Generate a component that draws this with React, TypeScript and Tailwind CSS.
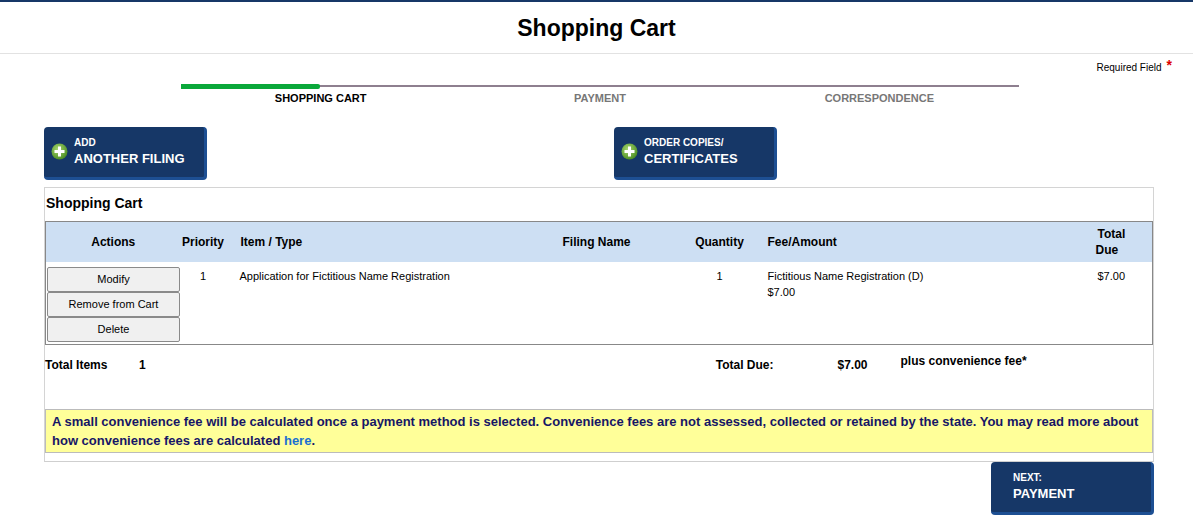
import React from "react";

const Plus = () => (
  <svg width="17" height="17" viewBox="0 0 17 17" className="shrink-0">
    <defs>
      <radialGradient id="g" cx="40%" cy="35%" r="65%">
        <stop offset="0%" stopColor="#a8d870" />
        <stop offset="100%" stopColor="#4e8f25" />
      </radialGradient>
    </defs>
    <circle cx="8.5" cy="8.5" r="8" fill="url(#g)" />
    <rect x="7" y="3.5" width="3" height="10" fill="#fff" />
    <rect x="3.5" y="7" width="10" height="3" fill="#fff" />
  </svg>
);

const NavBtn = ({ top, bottom, icon = true }: { top: string; bottom: string; icon?: boolean }) => (
  <div className="w-[163px] h-[53px] bg-[#163767] rounded-[4px] border-r-[3px] border-b-[3px] border-[#1d4f93] flex items-center text-white font-bold">
    {icon ? <div className="ml-[7px] mr-[6px]"><Plus /></div> : <div className="w-[22px]" />}
    <div className="flex flex-col leading-none">
      <span className="text-[10px] mb-[4px]">{top}</span>
      <span className="text-[13px]">{bottom}</span>
    </div>
  </div>
);

const GrayBtn = ({ label }: { label: string }) => (
  <button className="w-[133px] h-[25px] bg-[#f0f0f0] border border-[#8a8a8a] rounded-[2px] text-[11px] text-black">{label}</button>
);

export default function App() {
  return (
    <div className="w-[1193px] h-[529px] bg-white overflow-hidden text-black" style={{ fontFamily: '"Liberation Sans", Arial, sans-serif' }}>
      <div className="h-[2px] bg-[#163767]" />
      <div className="h-[52px] border-b border-[#e2e2e2] flex items-center justify-center">
        <h1 className="text-[23px] font-bold mt-[1px]">Shopping Cart</h1>
      </div>
      <div className="flex justify-end pr-[21px] mt-[4px] h-[14px]">
        <span className="text-[10px] mt-[2px]">Required Field</span>
        <span className="text-[#d00] text-[14px] font-bold ml-[5px] leading-none">*</span>
      </div>
      <div className="ml-[181px] w-[838px] mt-[12px]">
        <div className="relative h-[5px]">
          <div className="absolute left-0 right-0 top-[1px] h-[2px] bg-[#8e7f8f]" />
          <div className="absolute left-0 top-0 w-[139px] h-[5px] bg-[#0aa83a] rounded-r-[2px]" />
        </div>
        <div className="grid grid-cols-3 text-[11px] font-bold mt-[1px] text-center">
          <span className="text-black">SHOPPING CART</span>
          <span className="text-[#777]">PAYMENT</span>
          <span className="text-[#777]">CORRESPONDENCE</span>
        </div>
      </div>
      <div className="flex ml-[44px] mt-[20px] gap-[407px]">
        <NavBtn top="ADD" bottom="ANOTHER FILING" />
        <NavBtn top="ORDER COPIES/" bottom="CERTIFICATES" />
      </div>
      <div className="ml-[44px] w-[1110px] h-[275px] mt-[7px] border border-[#d4d4d4] border-b-[#cfcfcf]">
        <div className="text-[14px] font-bold pl-[1px] pt-[5px] h-[33px]">Shopping Cart</div>
        <table className="w-[1108px] border border-[#888] border-collapse text-[12px] table-fixed">
          <colgroup>
            <col className="w-[135px]" />
            <col className="w-[45px]" />
            <col className="w-[284px]" />
            <col className="w-[174px]" />
            <col className="w-[72px]" />
            <col className="w-[332px]" />
            <col />
          </colgroup>
          <thead>
            <tr className="bg-[#cddff3] h-[41px] font-bold">
              <th className="font-bold">Actions</th>
              <th className="font-bold">Priority</th>
              <th className="font-bold text-left pl-[15px]">Item / Type</th>
              <th className="font-bold">Filing Name</th>
              <th className="font-bold">Quantity</th>
              <th className="font-bold text-left pl-[12px]">Fee/Amount</th>
              <th className="font-bold text-left pl-[10px] leading-[16px]">Total<br /><span className="-ml-[2px]">Due</span></th>
            </tr>
          </thead>
          <tbody>
            <tr className="h-[82px] align-top text-[11px]">
              <td className="pl-[1px] pt-[5px]">
                <div className="flex flex-col">
                  <GrayBtn label="Modify" />
                  <GrayBtn label="Remove from Cart" />
                  <GrayBtn label="Delete" />
                </div>
              </td>
              <td className="text-center pt-[6px]">1</td>
              <td className="pl-[14px] pt-[6px]">Application for Fictitious Name Registration</td>
              <td />
              <td className="text-center pt-[6px]">1</td>
              <td className="pl-[12px] pt-[6px] leading-[16px]">Fictitious Name Registration (D)<br />$7.00</td>
              <td className="pl-[10px] pt-[6px]">$7.00</td>
            </tr>
          </tbody>
        </table>
        <div className="flex text-[12px] font-bold h-[64px] pt-[11px]">
          <span className="w-[94px]">Total Items</span>
          <span>1</span>
          <span className="ml-[570px]">Total Due:</span>
          <span className="ml-[64px]">$7.00</span>
          <span className="ml-[33px] -mt-[4px]">plus convenience fee*</span>
        </div>
        <div className="bg-[#ffff99] border border-[#bbb] px-[6px] py-[2px] text-[13px] font-bold text-[#161666] leading-[19px]">
          A small convenience fee will be calculated once a payment method is selected. Convenience fees are not assessed, collected or retained by the state. You may read more about how convenience fees are calculated <span className="text-[#1a6fd1]">here</span>.
        </div>
      </div>
      <div className="ml-[991px]">
        <NavBtn top="NEXT:" bottom="PAYMENT" icon={false} />
      </div>
    </div>
  );
}
